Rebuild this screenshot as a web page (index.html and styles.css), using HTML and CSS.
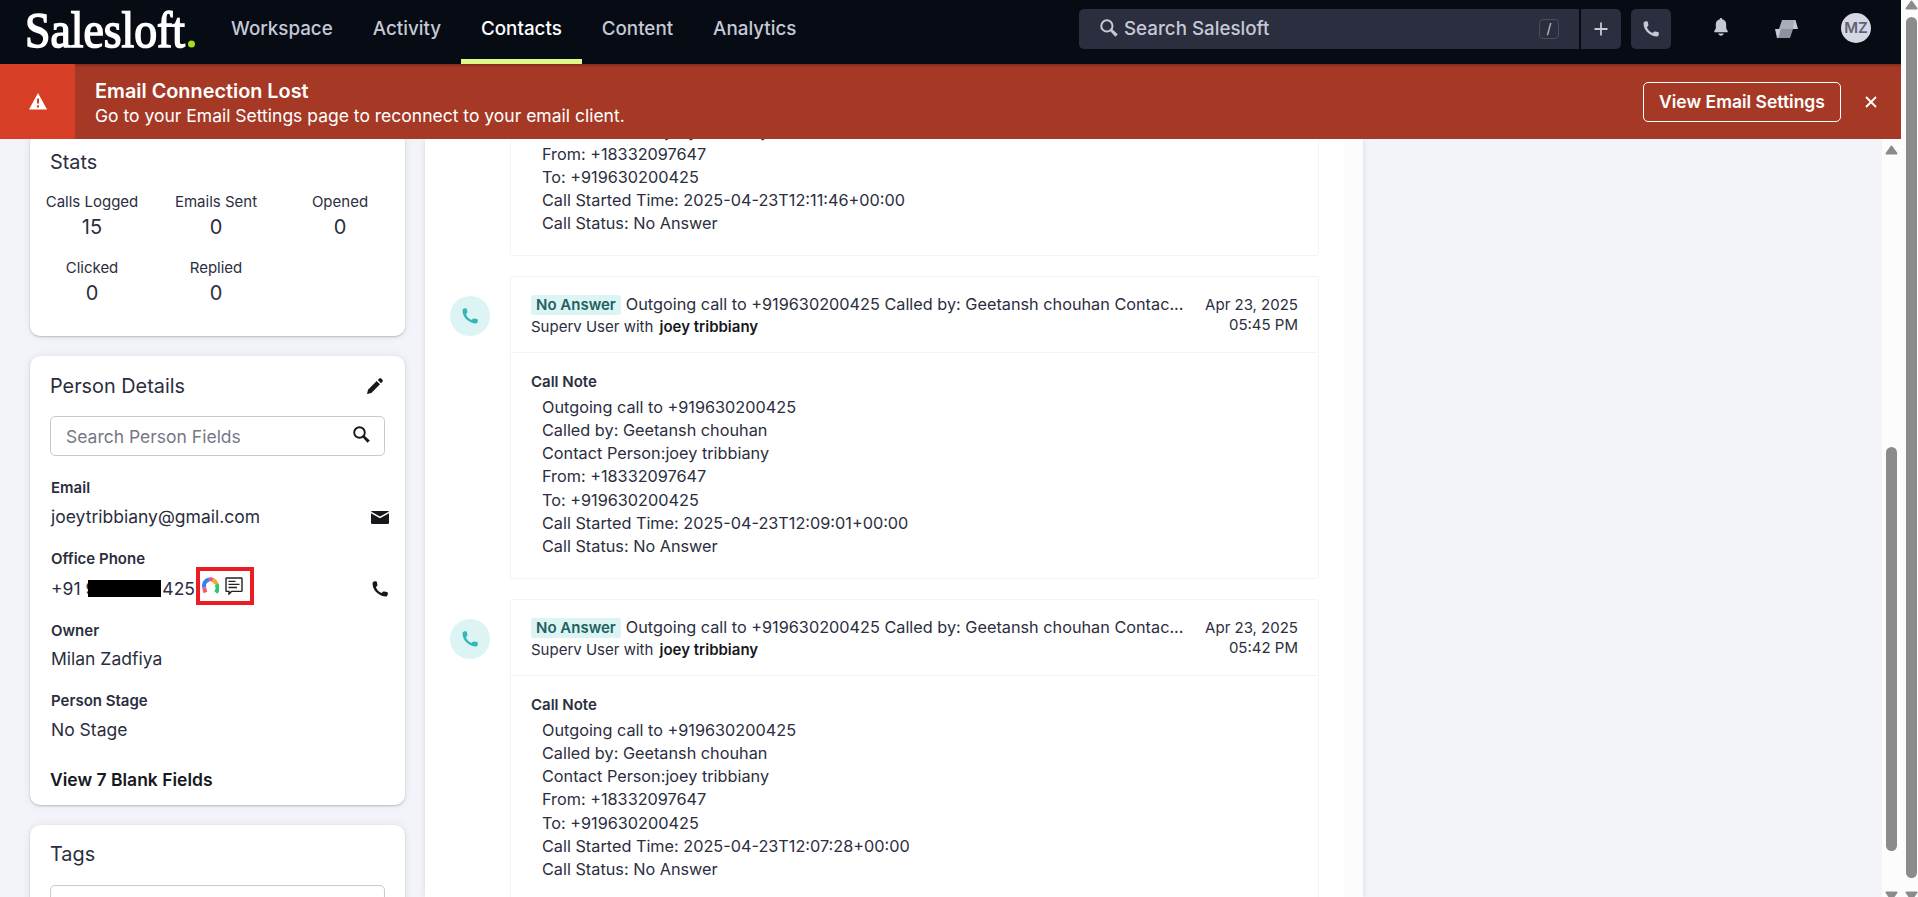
FILE: index.html
```
<!DOCTYPE html>
<html lang="en">
<head>
  <meta charset="UTF-8" />
  <meta name="viewport" content="width=device-width, initial-scale=1.0"/>
  <title>Salesloft - Contacts</title>
  <link rel="stylesheet" href="styles.css">
</head>
<body>

  <!-- Shared icons -->
  <svg class="icon-defs" width="0" height="0">
    <symbol id="phone" viewBox="0 0 16 16">
      <path d="M.7 1.5C1.500.2 3.200 0 4 .2c.5.1.8.5.9 1l.5 2.600c.1.500-.1 1-.4 1.300L3.900 6.200c1 2.500 3 4.700 5.700 5.800l1.300-1.200c.4-.3.9-.4 1.300-.3l2.700.6c.5.1.9.5.9 1 .2 1.300-.3 2.700-1.300 3.400C8 16-.5 9 .7 1.500z"/>
    </symbol>
    <symbol id="search" viewBox="0 0 17 17">
      <circle cx="6.500" cy="6.500" r="5.300" class="line" stroke="currentColor" stroke-width="1.900"/>
      <path d="M10.500 8.800l6.300 5.600-2.300 2.400-5.600-6.200z"/>
    </symbol>
  </svg>

  <div class="app">
    <header class="topbar">
      <svg class="logo" width="172" height="62" viewBox="0 0 172 62">
        <text x="0" y="46.500" textLength="160" lengthAdjust="spacingAndGlyphs">Salesloft</text>
        <circle cx="166.500" cy="44" r="3.500"/>
      </svg>
      <nav class="nav">
        <a>Workspace</a>
        <a>Activity</a>
        <a class="active">Contacts</a>
        <a>Content</a>
        <a>Analytics</a>
      </nav>
      <div class="search">
        <svg class="search-icon" width="18" height="18"><use href="#search"/></svg>
        <span>Search Salesloft</span>
        <kbd>/</kbd>
      </div>
      <button class="square add">
        <svg width="14" height="14" viewBox="0 0 14 14"><path d="M7 .5v13M.5 7h13" stroke="currentColor" stroke-width="1.800"/></svg>
      </button>
      <button class="square call"><svg width="16" height="16"><use href="#phone"/></svg></button>
      <svg class="bell" width="14" height="18" viewBox="0 0 14 18">
        <path d="M7 0c.8 0 1.200.5 1.200 1.300 2.500.5 4 2.500 4 5v4.200L13.700 13v1.200H.3V13l1.500-2.500V6.300c0-2.500 1.500-4.500 4-5C5.800.5 6.200 0 7 0zM4.300 15.500h5.400c-.3 1.300-1.300 2.200-2.700 2.200s-2.400-.9-2.700-2.200z"/>
      </svg>
      <svg class="ribbon" width="23" height="18" viewBox="0 0 23 18">
        <path d="M7 0h13.500L17 9H4z" fill="#a9adb9"/>
        <path d="M20.500 0L23 9h-6L19.500 0z" fill="#c5c9d6"/>
        <path d="M6 9h12l-3 9H3z" fill="#8d919e"/>
        <path d="M0 9h6L3.500 18H2z" fill="#c5c9d6"/>
      </svg>
      <div class="avatar">MZ</div>
    </header>

    <div class="banner">
      <div class="banner-icon">
        <svg width="18" height="17" viewBox="0 0 18 17">
          <path d="M9 0l9 16.500H0z" fill="#fff"/>
          <path d="M9 5.500v5M9 12.300v2.200" stroke="#d63f26" stroke-width="2"/>
        </svg>
      </div>
      <div class="banner-text">
        <h2>Email Connection Lost</h2>
        <p>Go to your Email Settings page to reconnect to your email client.</p>
      </div>
      <button class="banner-button">View Email Settings</button>
      <svg class="close" width="12" height="12" viewBox="0 0 12 12"><path d="M1 1l10 10M11 1L1 11" stroke="#fff" stroke-width="1.800"/></svg>
    </div>

    <div class="content">
      <aside class="sidebar">
        <section class="card stats">
          <h3>Stats</h3>
          <div class="stats-grid">
            <div class="stat"><span>Calls Logged</span><b>15</b></div>
            <div class="stat"><span>Emails Sent</span><b>0</b></div>
            <div class="stat"><span>Opened</span><b>0</b></div>
            <div class="stat"><span>Clicked</span><b>0</b></div>
            <div class="stat"><span>Replied</span><b>0</b></div>
          </div>
        </section>

        <section class="card details">
          <div class="card-head">
            <h3>Person Details</h3>
            <svg width="16" height="16" viewBox="0 0 16 16"><path d="M0 16l1-4.300L9.700 3 13 6.300 4.300 15zM10.800 2L12.200.6c.6-.6 1.500-.6 2.100 0l1.100 1.100c.6.6.6 1.500 0 2.100L14 5.200z"/></svg>
          </div>
          <div class="field-search">
            <span>Search Person Fields</span>
            <svg width="17" height="17"><use href="#search"/></svg>
          </div>
          <div class="field email">
            <label>Email</label>
            <div class="value">
              <span>joeytribbiany@gmail.com</span>
              <svg width="18" height="13" viewBox="0 0 18 13">
                <rect width="18" height="13" rx="1.200"/>
                <path class="line" d="M0 1.500l9 5 9-5" stroke="#fff" stroke-width="1.500"/>
              </svg>
            </div>
          </div>
          <div class="field office">
            <label>Office Phone</label>
            <div class="value">
              <span class="number">+91 9<i class="redacted"></i>425</span>
              <span class="highlight">
                <svg class="line" width="17" height="17" viewBox="0 0 17 17" stroke-width="4">
                  <path d="M2.300 10.500A6.200 6.200 0 0 1 7 2.500" stroke="#3f7df0"/>
                  <path d="M7 2.500a6.200 6.200 0 0 1 4 .5" stroke="#ee4f9e"/>
                  <path d="M10.700 2.800a6.200 6.200 0 0 1 3.600 4.400" stroke="#fba81c"/>
                  <path d="M14.400 7.200a7 7 0 0 1-.6 8.300" stroke="#2fc573"/>
                  <path d="M2.300 10.500q.3 3 1.200 5" stroke="#fb5768"/>
                </svg>
                <svg class="line" width="18" height="18" viewBox="0 0 18 18" stroke="#222" stroke-width="1.400">
                  <path d="M1.700 1h14.600q.7 0 .7.700v12q0 .7-.7.700H6.500L4 17v-2.600H1.700q-.7 0-.7-.7v-12q0-.7.7-.7z"/>
                  <path d="M3.500 4.400h7M3.500 7.400h11M3.500 10.500h8.500"/>
                </svg>
              </span>
              <svg class="dial" width="16" height="16"><use href="#phone"/></svg>
            </div>
          </div>
          <div class="field owner">
            <label>Owner</label>
            <div class="value"><span>Milan Zadfiya</span></div>
          </div>
          <div class="field stage">
            <label>Person Stage</label>
            <div class="value"><span>No Stage</span></div>
          </div>
          <a class="blank-fields">View 7 Blank Fields</a>
        </section>

        <section class="card tags">
          <h3>Tags</h3>
          <div class="field-search"></div>
        </section>
      </aside>

      <main class="feed">
        <article class="activity first">
          <div class="activity-card">
            <div class="note">
              <p>Contact Person:joey tribbiany</p>
              <p>From: +18332097647</p>
              <p>To: +919630200425</p>
              <p>Call Started Time: 2025-04-23T12:11:46+00:00</p>
              <p>Call Status: No Answer</p>
            </div>
          </div>
        </article>

        <article class="activity">
          <div class="activity-icon"><svg width="16" height="16"><use href="#phone"/></svg></div>
          <div class="activity-card">
            <div class="activity-head">
              <div class="summary">
                <div class="subject"><span class="badge">No Answer</span>Outgoing call to +919630200425 Called by: Geetansh chouhan Contac...</div>
                <div class="people">Superv User with <strong>joey tribbiany</strong></div>
              </div>
              <div class="date">Apr 23, 2025<br>05:45 PM</div>
            </div>
            <h4>Call Note</h4>
            <div class="note">
              <p>Outgoing call to +919630200425</p>
              <p>Called by: Geetansh chouhan</p>
              <p>Contact Person:joey tribbiany</p>
              <p>From: +18332097647</p>
              <p>To: +919630200425</p>
              <p>Call Started Time: 2025-04-23T12:09:01+00:00</p>
              <p>Call Status: No Answer</p>
            </div>
          </div>
        </article>

        <article class="activity">
          <div class="activity-icon"><svg width="16" height="16"><use href="#phone"/></svg></div>
          <div class="activity-card">
            <div class="activity-head">
              <div class="summary">
                <div class="subject"><span class="badge">No Answer</span>Outgoing call to +919630200425 Called by: Geetansh chouhan Contac...</div>
                <div class="people">Superv User with <strong>joey tribbiany</strong></div>
              </div>
              <div class="date">Apr 23, 2025<br>05:42 PM</div>
            </div>
            <h4>Call Note</h4>
            <div class="note">
              <p>Outgoing call to +919630200425</p>
              <p>Called by: Geetansh chouhan</p>
              <p>Contact Person:joey tribbiany</p>
              <p>From: +18332097647</p>
              <p>To: +919630200425</p>
              <p>Call Started Time: 2025-04-23T12:07:28+00:00</p>
              <p>Call Status: No Answer</p>
            </div>
          </div>
        </article>
      </main>

      <div class="scrollbar inner">
        <svg width="13" height="10" viewBox="0 0 13 10"><path d="M6.500 1.500l5 7h-10z"/></svg>
        <div class="thumb"></div>
        <svg width="13" height="10" viewBox="0 0 13 10"><path d="M6.500 8.500l5-7h-10z"/></svg>
      </div>
    </div>
  </div>

  <div class="scrollbar outer">
    <svg width="13" height="10" viewBox="0 0 13 10"><path d="M6.500 1.500l5 7h-10z"/></svg>
    <div class="thumb"></div>
    <svg width="13" height="10" viewBox="0 0 13 10"><path d="M6.500 8.500l5-7h-10z"/></svg>
  </div>

</body>
</html>
```
FILE: styles.css
```
:root {
  --topbar: #070b14;
  --control: #2b2e3e;
  --muted: #c5c9d6;
  --text: #2b2e3e;
  --dark: #16181d;
  --banner: #a63926;
  --page: #f3f4f9;
  --teal: #34b6bd;
  --teal-light: #ddf4f4;
}

* {
  margin: 0; padding: 0; box-sizing: border-box;
}

body {
  display: flex;
  height: 897px;
  font-family: Inter, sans-serif;
  color: var(--text);
  overflow: hidden;
}

svg {
  display: block;
  flex: none;
  fill: currentColor;
}

.line {
  fill: none;
}

.icon-defs {
  position: absolute;
}

.app {
  width: 1901px;
  display: flex;
  flex-direction: column;
}

/* Top bar */
.topbar {
  height: 64px;
  flex: none;
  display: flex;
  align-items: flex-start;
  background: var(--topbar);
  color: var(--muted);
}

.logo {
  margin-left: 25px;
  overflow: visible;
}

.logo text {
  font-family: "Liberation Serif", serif;
  font-size: 51px;
  fill: #fff;
  stroke: #fff;
  stroke-width: 1.6px;
}

.logo circle {
  fill: #a5dc1c;
}

.nav {
  display: flex;
  margin-left: 14px;
}

.nav a {
  height: 64px;
  padding: 0 20px;
  font-size: 18.8px;
  font-weight: 500;
  line-height: 58px;
}

.nav .active {
  color: #fff;
  border-bottom: 5px solid #dcf98a;
}

.search {
  width: 500px;
  height: 40px;
  margin: 9px 2px 0 auto;
  padding: 0 20px;
  display: flex;
  align-items: center;
  background: var(--control);
  border-radius: 5px 0 0 5px;
  font-size: 18.75px;
  font-weight: 500;
}

.search-icon {
  margin: -2px 6px 0 1px;
}

.search span {
  margin-top: -1px;
}

.search kbd {
  width: 20px;
  height: 20px;
  margin-left: auto;
  border: 1px solid #4a4d5c;
  border-radius: 4px;
  font: 14px/18px Inter, sans-serif;
  text-align: center;
}

.square {
  width: 40px;
  height: 40px;
  margin-top: 9px;
  display: flex;
  align-items: center;
  justify-content: center;
  background: var(--control);
  color: var(--muted);
  border: none;
  border-radius: 5px;
}

.square.add {
  border-radius: 0 5px 5px 0;
  margin-right: 10px;
}

.bell {
  margin: 18px 0 0 43px;
}

.ribbon {
  margin: 20px 0 0 47px;
}

.avatar {
  width: 30px;
  height: 30px;
  margin: 13px 30px 0 43px;
  border-radius: 50%;
  background: #d5d8e4;
  color: #5f6371;
  font-size: 15px;
  font-weight: 600;
  line-height: 30px;
  text-align: center;
}

/* Alert banner */
.banner {
  height: 75px;
  flex: none;
  display: flex;
  align-items: center;
  background: var(--banner);
  box-shadow: inset 0 3px 3px -2px rgba(0, 0, 0, 0.35);
  color: #fff;
}

.banner-icon {
  width: 75px;
  height: 75px;
  display: flex;
  align-items: center;
  justify-content: center;
  background: #d63f26;
}

.banner-text {
  flex: 1;
  padding: 4px 0 0 20px;
}

.banner h2 {
  font-size: 19.85px;
  font-weight: 600;
  line-height: 25px;
}

.banner p {
  font-size: 17.5px;
  line-height: 24px;
}

.banner-button {
  width: 198px;
  height: 40px;
  background: none;
  border: 1px solid #fff;
  border-radius: 5px;
  color: #fff;
  font: 600 17.5px Inter, sans-serif;
}

.close {
  margin: 0 24px;
}

/* Page content */
.content {
  flex: 1;
  min-height: 0;
  display: flex;
  background: var(--page);
  overflow: hidden;
}

.sidebar {
  width: 375px;
  margin: -6px 20px 0 30px;
  display: flex;
  flex-direction: column;
  gap: 20px;
}

.card {
  flex: none;
  padding: 0 20px;
  background: #fff;
  border-radius: 10px;
  box-shadow: 0 1px 2px rgba(30, 35, 60, 0.25), 0 0 10px rgba(30, 35, 60, 0.08);
}

.card h3 {
  font-size: 19.85px;
  font-weight: 400;
  line-height: 24px;
}

.stats {
  height: 203px;
  padding: 17px 3px 0 0;
}

.stats h3 {
  padding-left: 20px;
}

.stats-grid {
  display: grid;
  grid-template-columns: repeat(3, 124px);
  row-gap: 16px;
  margin-top: 16px;
}

.stat {
  text-align: center;
}

.stat span {
  display: block;
  font-size: 15px;
  line-height: 24px;
}

.stat b {
  display: block;
  font-size: 20px;
  font-weight: 400;
  line-height: 26px;
}

.details {
  height: 449px;
  padding-top: 18px;
}

.card-head {
  display: flex;
  justify-content: space-between;
  align-items: center;
  padding-right: 2px;
}

.details svg {
  color: var(--dark);
}

.field-search {
  height: 40px;
  padding: 0 14px 0 15px;
  display: flex;
  justify-content: space-between;
  align-items: center;
  border: 1px solid #c7c9cf;
  border-radius: 5px;
  color: #757885;
  font-size: 17.5px;
}

.details .field-search {
  margin-top: 18px;
}

.field-search svg {
  margin-top: -4px;
}

.field {
  margin: 0 -4px 0 1px;
}

.field label {
  display: block;
  font-size: 15px;
  font-weight: 600;
  line-height: 20px;
}

.field .value {
  display: flex;
  justify-content: space-between;
  align-items: center;
  font-size: 17.5px;
  line-height: 24px;
}

.email {
  margin-top: 22px;
}

.email .value {
  margin-top: 7px;
}

.office {
  margin-top: 20px;
}

.office .value {
  margin-top: 8px;
  height: 24px;
}

.redacted {
  display: inline-block;
  width: 73px;
  height: 17px;
  margin: 0 1px 0 -8px;
  background: #000;
  vertical-align: -2px;
  position: relative;
}

.highlight {
  width: 58px;
  height: 38px;
  margin: -6px auto 0 1px;
  display: flex;
  gap: 6px;
  padding: 6px 0 0 2px;
  border: 4px solid #ed1c24;
}

.dial {
  margin-right: 1px;
}

.owner {
  margin-top: 20px;
}

.owner .value {
  margin-top: 6px;
}

.stage {
  margin-top: 20px;
}

.stage .value {
  margin-top: 7px;
}

.blank-fields {
  display: block;
  margin-top: 26px;
  color: var(--dark);
  font-size: 17.5px;
  font-weight: 600;
  line-height: 24px;
}

.tags {
  height: 110px;
  padding-top: 17px;
}

.tags .field-search {
  margin-top: 19px;
}

/* Activity feed */
.feed {
  width: 938px;
  padding-right: 44px;
  background: linear-gradient(to left, #fcfcfc 19px, #fff 19px);
  box-shadow: 0 0 6px rgba(30, 35, 60, 0.12);
}

.activity {
  display: flex;
  height: 303px;
  margin-bottom: 20px;
  padding-left: 25px;
}

.activity-icon {
  width: 40px;
  height: 40px;
  margin: 20px 20px 0 0;
  display: flex;
  align-items: center;
  justify-content: center;
  border-radius: 50%;
  background: var(--teal-light);
  color: var(--teal);
}

.activity-card {
  width: 809px;
  border: 1px solid #f4f4f5;
  border-radius: 2px;
}

.first {
  height: 137px;
  margin-top: -20px;
  padding-left: 85px;
}

.first .note {
  margin-top: -0.5px;
}

.activity-head {
  height: 76px;
  padding: 16px 20px 0;
  display: flex;
  justify-content: space-between;
  border-bottom: 1px solid #f4f4f5;
}

.subject {
  height: 23px;
  font-size: 16.25px;
  line-height: 22px;
  white-space: nowrap;
}

.badge {
  display: inline-block;
  height: 20px;
  margin-right: 5px;
  padding: 0 5px;
  background: var(--teal-light);
  border-radius: 3px;
  color: #21615f;
  font-size: 15px;
  font-weight: 600;
  line-height: 20px;
}

.people {
  font-size: 15px;
  line-height: 22px;
}

.people strong {
  margin-left: 2px;
  color: var(--dark);
  font-weight: 600;
}

.date {
  padding-top: 2px;
  font-size: 15px;
  line-height: 20px;
  text-align: right;
}

.activity h4 {
  margin: 18px 0 3px 20px;
  font-size: 15px;
  font-weight: 600;
  line-height: 22px;
}

.note {
  padding-left: 31px;
}

.note p {
  font-size: 16.25px;
  line-height: 23.125px;
}

/* Scrollbars */
.scrollbar {
  display: flex;
  flex-direction: column;
  align-items: center;
  background: #fcfcfc;
  color: #8b8b8b;
  overflow: hidden;
}

.scrollbar path {
  stroke: currentColor;
  stroke-width: 2;
  stroke-linejoin: round;
}

.thumb {
  width: 11px;
  flex: none;
  border-radius: 6px;
  background: #8b8b8b;
}

.outer {
  width: 17px;
  padding-left: 3px;
}

.outer .thumb {
  height: 861px;
  margin: 7px 0 13px;
}

.inner {
  width: 19px;
  margin-left: auto;
  padding-top: 6px;
}

.inner .thumb {
  height: 404px;
  margin: 292px 0 40px;
}
```
